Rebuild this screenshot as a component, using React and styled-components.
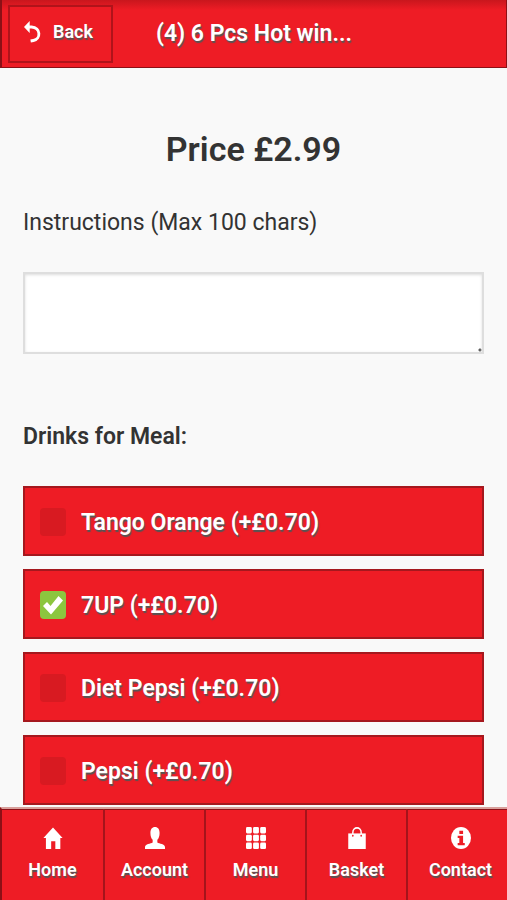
import { useState } from "react"
import styled, { createGlobalStyle } from "styled-components"

const mainRed = "#ee1c25";
const darkRed = "#8c1016";

const drinksList = [
    { id: "tango", name: "Tango Orange", price: "0.70" },
    { id: "7up", name: "7UP", price: "0.70" },
    { id: "diet-pepsi", name: "Diet Pepsi", price: "0.70" },
    { id: "pepsi", name: "Pepsi", price: "0.70" },
];

const navList = [
    { name: "Home", icon: <path d="M12 0.500 L23.500 12 H20.800 V24 H14.800 V15.500 H9.800 V24 H3.500 V12 H0.500 Z" /> },
    { name: "Account", icon: <path d="M12 0 C15.500 0 17.500 2.500 17.500 6.500 C17.500 10 16.500 12.500 14.800 14 V17 C17 18.500 24 18.500 24 22 V24 H0 V22 C0 18.500 7 18.500 9.200 17 V14 C7.500 12.500 6.500 10 6.500 6.500 C6.500 2.500 8.500 0 12 0 Z" /> },
    { name: "Menu", icon: [0, 8.5, 17].map((y) => [0, 8.5, 17].map((x) => <rect key={`${x}-${y}`} x={x} y={y} width="7" height="7" rx="1.500" />)) },
    { name: "Basket", icon: <><path d="M1.500 7 H22.500 V24 H1.500 Z" /><path d="M7 9 V6 C7 -0.800 17 -0.800 17 6 V9" fill="none" stroke="#fff" strokeWidth="1.800" /><circle cx="7" cy="9.500" r="1" fill={mainRed} /><circle cx="17" cy="9.500" r="1" fill={mainRed} /></> },
    { name: "Contact", icon: <><circle cx="12" cy="12" r="12" /><path d="M10 4 H14.500 V7.500 H10 Z M8 9.500 H14.500 V17.500 H16.500 V20 H8 V17.500 H10 V12 H8 Z" fill={mainRed} /></> },
];

export default function App() {
    const [selected, setSelected] = useState(["7up"]);
    const [instructions, setInstructions] = useState("");

    function toggleDrink(id) {
        if (selected.includes(id)) {
            setSelected(selected.filter((s) => s !== id));
        } else {
            setSelected([...selected, id]);
        }
    }

    return (
        <>
            <GlobalStyle />
            <Header>
                <BackButton type="button">
                    <svg width="17" height="22" viewBox="0 0 18 22" preserveAspectRatio="none" aria-hidden="true">
                        <path d="M0 6 L6 0 V12 Z" fill="#fff" />
                        <path d="M4 6 H8 C18 6.500 18 18 10 19.500 L7 20" fill="none" stroke="#fff" strokeWidth="3" />
                    </svg>
                    Back
                </BackButton>
                <Title>(4) 6 Pcs Hot win...</Title>
            </Header>

            <PageContainer>
                <Price>Price £2.99</Price>

                <InstructionsLabel htmlFor="instructions">Instructions (Max 100 chars)</InstructionsLabel>
                <Instructions id="instructions" maxLength={100} value={instructions} onChange={(e) => setInstructions(e.target.value)} />

                <OptionsTitle>Drinks for Meal:</OptionsTitle>
                <OptionsList>
                    {drinksList.map(({ id, name, price }) => (
                        <Option key={id}>
                            <CheckBox type="checkbox" checked={selected.includes(id)} onChange={() => toggleDrink(id)} />
                            {selected.includes(id) &&
                                <CheckMark viewBox="0 0 26 28" aria-hidden="true">
                                    <path d="M3 15 L7 11 L10.500 15 L18.500 5 L23 9.500 L11 23.500 Z" fill="#fff" />
                                </CheckMark>}
                            {name} (+£{price})
                        </Option>
                    ))}
                </OptionsList>
            </PageContainer>

            <NavBar>
                {navList.map(({ name, icon }) => (
                    <NavItem key={name} href={`#${name.toLowerCase()}`}>
                        <svg width="20" height="22" viewBox="0 0 24 24" preserveAspectRatio="none" fill="#fff" aria-hidden="true">{icon}</svg>
                        {name}
                    </NavItem>
                ))}
            </NavBar>
        </>
    )
}

const GlobalStyle = createGlobalStyle`
    * {
        box-sizing: border-box;
    }
    body {
        margin: 0;
        background-color: #f9f9f9;
        color: #333;
        font-family: 'Roboto', sans-serif;
        font-size: 23px;
    }
    body::-webkit-scrollbar {
        display: none;
    }
`
const Header = styled.header`
    display: grid;
    grid-template-columns: 1fr auto 1fr;
    align-items: center;
    height: 68px;
    padding: 0 6px;
    background: linear-gradient(#c9161d, ${mainRed} 10px);
    border: 1px solid ${darkRed};
    border-left-width: 2px;
    border-top: none;
    color: #fff;
    text-shadow: 1px 2px 1px #555;
`
const BackButton = styled.button`
    display: flex;
    align-items: center;
    justify-self: start;
    gap: 12px;
    height: 58px;
    padding: 0 18px 4px 14px;
    background-color: ${mainRed};
    border: 2px solid #b0131a;
    color: #fff;
    font: 600 18px 'Roboto', sans-serif;
    text-shadow: inherit;
`
const Title = styled.h1`
    margin: 0;
    font-size: 23px;
    font-weight: 600;
`
const PageContainer = styled.main`
    display: flex;
    flex-direction: column;
    padding: 57px 23px 94px;
`
const Price = styled.h2`
    margin: 0;
    font-size: 34px;
    font-weight: 600;
    line-height: 48px;
    text-align: center;
`
const InstructionsLabel = styled.label`
    margin-top: 34px;
    line-height: 32px;
`
const Instructions = styled.textarea`
    height: 82px;
    margin-top: 33px;
    padding: 8px;
    border: 2px solid #dedede;
    background: radial-gradient(circle, #555 1px, transparent 2px) right bottom / 4px 4px no-repeat #fff;
    box-shadow: inset 0 1px 3px #ddd;
    color: inherit;
    font: inherit;
    resize: none;
`
const OptionsTitle = styled.h3`
    margin: 67px 0 33px;
    font-size: 23px;
    font-weight: 600;
    line-height: 32px;
`
const OptionsList = styled.div`
    display: flex;
    flex-direction: column;
    gap: 13px;
`
const Option = styled.label`
    position: relative;
    display: flex;
    align-items: center;
    gap: 15px;
    height: 70px;
    padding: 2px 15px 0;
    background-color: ${mainRed};
    border: 2px solid #a5181e;
    color: #fff;
    font-weight: 600;
    text-shadow: 1px 2px 1px #555;
`
const CheckBox = styled.input`
    appearance: none;
    width: 26px;
    height: 28px;
    margin: 0;
    border-radius: 4px;
    background-color: ${({ checked }) => checked ? "#8cc63f" : "#d81a21"};
`
const CheckMark = styled.svg`
    position: absolute;
    left: 15px;
    width: 26px;
    height: 28px;
    pointer-events: none;
`
const NavBar = styled.nav`
    position: fixed;
    left: 0;
    right: 0;
    bottom: 0;
    display: grid;
    grid-template-columns: repeat(5, 1fr);
    height: 93px;
    border-top: 2px solid #d9a09c;
    border-left: 2px solid ${darkRed};
    background-color: ${mainRed};
`
const NavItem = styled.a`
    display: flex;
    flex-direction: column;
    align-items: center;
    gap: 8px;
    padding-top: 17px;
    border-top: 1px solid ${darkRed};
    border-left: 2px solid #a5141b;
    color: #fff;
    font-size: 18px;
    font-weight: 600;
    line-height: 26px;
    text-decoration: none;
    text-shadow: 1px 2px 1px #555;
    &:first-child {
        border-left: none;
    }
    &:last-child {
        padding-left: 6px;
    }
`
